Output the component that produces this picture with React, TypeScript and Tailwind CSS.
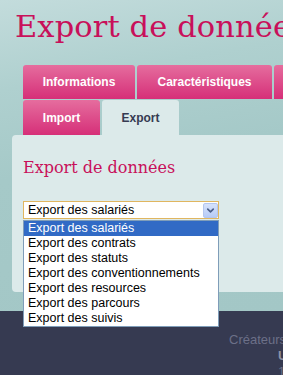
import { ChevronDown } from 'lucide-react';

const OPTIONS = [
  'Export des salariés',
  'Export des contrats',
  'Export des statuts',
  'Export des conventionnements',
  'Export des resources',
  'Export des parcours',
  'Export des suivis',
];

export default function App() {
  return (
    <div className="w-[283px] h-[375px] overflow-hidden relative font-['Liberation_Sans',Arial,sans-serif]">
      <div className="h-[311px] bg-[linear-gradient(170deg,#c3dcdc_0%,#afd0cf_25%,#a5c9c8_50%,#a3c7c6_100%)]">
        <h1 className="pl-[15px] pt-[12px] h-[42px] text-[30.5px] tracking-[0.1px] leading-none font-['DejaVu_Serif',serif] text-[#c8105a] whitespace-nowrap">
          Export de données
        </h1>

        <div className="mt-[23px] pl-[23px] flex gap-[2px] whitespace-nowrap">
          <div className="w-[112px] h-[34px] shrink-0 rounded-t-[3px] bg-[linear-gradient(#e56d9e,#d62f78)] flex items-center justify-center text-white text-[12px] font-bold">
            Informations
          </div>
          <div className="w-[135px] h-[34px] shrink-0 rounded-t-[3px] bg-[linear-gradient(#e56d9e,#d62f78)] flex items-center justify-center text-white text-[12px] font-bold">
            Caractéristiques
          </div>
          <div className="w-[120px] h-[34px] shrink-0 rounded-t-[3px] bg-[linear-gradient(#e56d9e,#d62f78)]" />
        </div>

        <div className="mt-[1px] pl-[23px] flex gap-[2px]">
          <div className="w-[77px] h-[35px] rounded-t-[3px] bg-[linear-gradient(#e56d9e,#d62f78)] flex items-center justify-center text-white text-[12px] font-bold">
            Import
          </div>
          <div className="w-[77px] h-[35px] rounded-t-[3px] bg-[#dceaea] flex items-center justify-center text-[#363b52] text-[12px] font-bold">
            Export
          </div>
        </div>

        <div className="ml-[12px] w-[300px] h-[157px] rounded-[4px] bg-[#dceaea] pl-[11px] pt-[25px] relative">
          <h2 className="text-[16px] leading-none h-[16px] font-['DejaVu_Serif',serif] text-[#c8105a] whitespace-nowrap">
            Export de données
          </h2>

          <div className="mt-[25px] w-[196px] h-[18px] border border-[#e0b660] bg-white flex items-center justify-between relative">
            <span className="pl-[4px] text-[12.5px] text-black leading-none">Export des salariés</span>
            <div className="w-[15px] h-[15px] rounded-[2px] border border-[#b4c6ef] bg-[linear-gradient(#d6e2fc,#b7cbf6)] flex items-center justify-center">
              <ChevronDown className="w-[11px] h-[11px] text-[#4b5f8a]" strokeWidth={3.5} />
            </div>

            <div className="absolute left-[-1px] top-[18px] w-[196px] border border-[#7f9db9] bg-white z-10">
              {OPTIONS.map((opt, i) => (
                <div
                  key={opt}
                  className={`h-[15px] pl-[4px] text-[12.5px] leading-[15px] whitespace-nowrap ${
                    i === 0 ? 'bg-[#316ac5] text-white' : 'text-black'
                  }`}
                >
                  {opt}
                </div>
              ))}
            </div>
          </div>
        </div>
      </div>

      <div className="h-[64px] bg-[#363a51] pt-[21px] pl-[229px] whitespace-nowrap text-[13px] leading-[16px]">
        <div className="text-[#6c7088]">Créateurs de solutions</div>
        <div className="pl-[49px] font-bold text-[#8e92a6]">Une équipe</div>
        <div className="pl-[49px] text-[#6c7088]">12 rue</div>
      </div>
    </div>
  );
}
